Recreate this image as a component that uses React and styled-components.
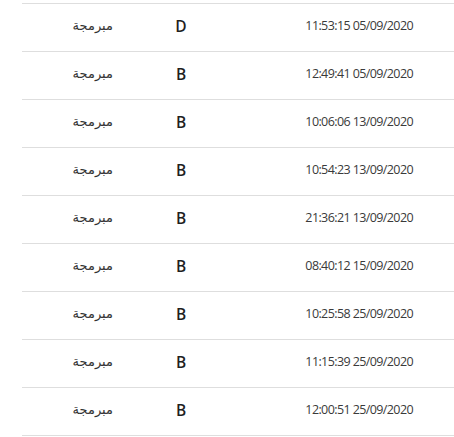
import styled, { createGlobalStyle } from "styled-components";

const GlobalStyle = createGlobalStyle`
  body {
    margin: 0;
    background: #ffffff;
    font-family: "Noto Sans", "DejaVu Sans", sans-serif;
    color: #333333;
  }
`;

const rows = [
  { time: "11:53:15 05/09/2020", grade: "D" },
  { time: "12:49:41 05/09/2020", grade: "B" },
  { time: "10:06:06 13/09/2020", grade: "B" },
  { time: "10:54:23 13/09/2020", grade: "B" },
  { time: "21:36:21 13/09/2020", grade: "B" },
  { time: "08:40:12 15/09/2020", grade: "B" },
  { time: "10:25:58 25/09/2020", grade: "B" },
  { time: "11:15:39 25/09/2020", grade: "B" },
  { time: "12:00:51 25/09/2020", grade: "B" },
];

const App = () => {
  return (
    <>
      <GlobalStyle />
      <Table dir="rtl">
        {rows.map((r, i) => (
          <Row key={i}>
            <DateCell>
              <span dir="ltr">{r.time}</span>
            </DateCell>
            <GradeCell>{r.grade}</GradeCell>
            <TypeCell>مبرمجة</TypeCell>
          </Row>
        ))}
      </Table>
    </>
  );
};

export default App;

const Table = styled.div`
  direction: rtl;
  margin-top: 3px;
  margin-left: 22px;
  border-top: 1px solid #dedede;
`;

const Row = styled.div`
  display: grid;
  grid-template-columns: 1fr 136px 91px;
  align-items: center;
  box-sizing: content-box;
  height: 43px;
  padding-right: 41px;
  padding-bottom: 4px;
  border-bottom: 1px solid #dedede;
`;

const DateCell = styled.div`
  text-align: right;
  font-family: "Open Sans", sans-serif;
  font-size: 12.5px;
  letter-spacing: -0.6px;
  color: #3a3a3a;
  span {
    unicode-bidi: isolate;
    direction: ltr;
  }
`;

const GradeCell = styled.div`
  text-align: center;
  font-family: "Open Sans", sans-serif;
  font-weight: 600;
  font-size: 15.5px;
  color: #1f1f1f;
`;

const TypeCell = styled.div`
  text-align: right;
  font-family: "DejaVu Sans", sans-serif;
  font-size: 13px;
  color: #333333;
`;
